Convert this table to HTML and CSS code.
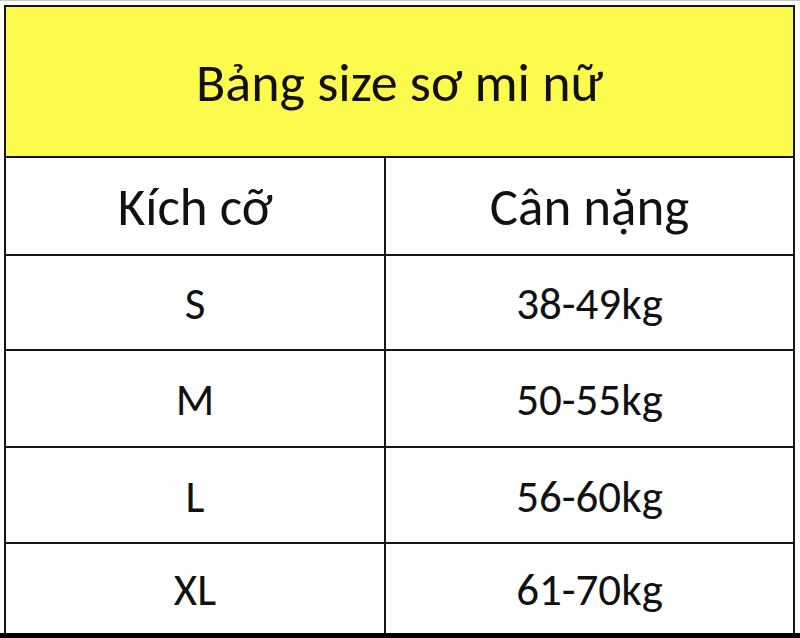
FILE: index.html
```html
<!DOCTYPE html>
<html lang="vi">
<head>
<meta charset="utf-8">
<title>Bảng size sơ mi nữ</title>
<link rel="stylesheet" href="styles.css">
</head>
<body>
<div class="page">
  <div class="topline"></div>
  <div class="sheet">
    <div class="grid">
      <div class="cell title">Bảng size sơ mi nữ</div>
      <div class="cell head">Kích cỡ</div>
      <div class="cell head">Cân nặng</div>
      <div class="cell data">S</div>
      <div class="cell data">38-49kg</div>
      <div class="cell data">M</div>
      <div class="cell data">50-55kg</div>
      <div class="cell data">L</div>
      <div class="cell data">56-60kg</div>
      <div class="cell data">XL</div>
      <div class="cell data">61-70kg</div>
    </div>
  </div>
  <div class="bottombar"></div>
</div>
</body>
</html>
```
FILE: styles.css
```css
html, body {
  margin: 0;
  padding: 0;
  background: #ffffff;
}
.page {
  width: 800px;
  height: 638px;
  display: flex;
  flex-direction: column;
  overflow: hidden;
  font-family: Carlito, Lato, "Liberation Sans", sans-serif;
  color: #111111;
}
.topline {
  height: 1px;
  background: #c8c8c8;
  margin-bottom: 4px;
}
.sheet {
  flex: 1;
  display: flex;
  padding-left: 4px;
  padding-right: 5px;
  min-height: 0;
}
.grid {
  flex: 1;
  display: grid;
  grid-template-columns: 378px 1fr;
  grid-template-rows: 149px 96px 93px 95px 94px 1fr;
  gap: 2px;
  background: #151515;
  padding: 2px 2px 0 2px;
}
.cell {
  background: #ffffff;
  display: flex;
  align-items: center;
  justify-content: center;
  white-space: nowrap;
}
.title {
  grid-column: 1 / 3;
  background: #fdfa4e;
  font-size: 54px;
  padding-top: 2px;
}
.head {
  font-size: 53px;
  padding-top: 2px;
}
.data {
  font-size: 45px;
  padding-top: 2px;
}
.bottombar {
  height: 5px;
  background: #000000;
}
```
